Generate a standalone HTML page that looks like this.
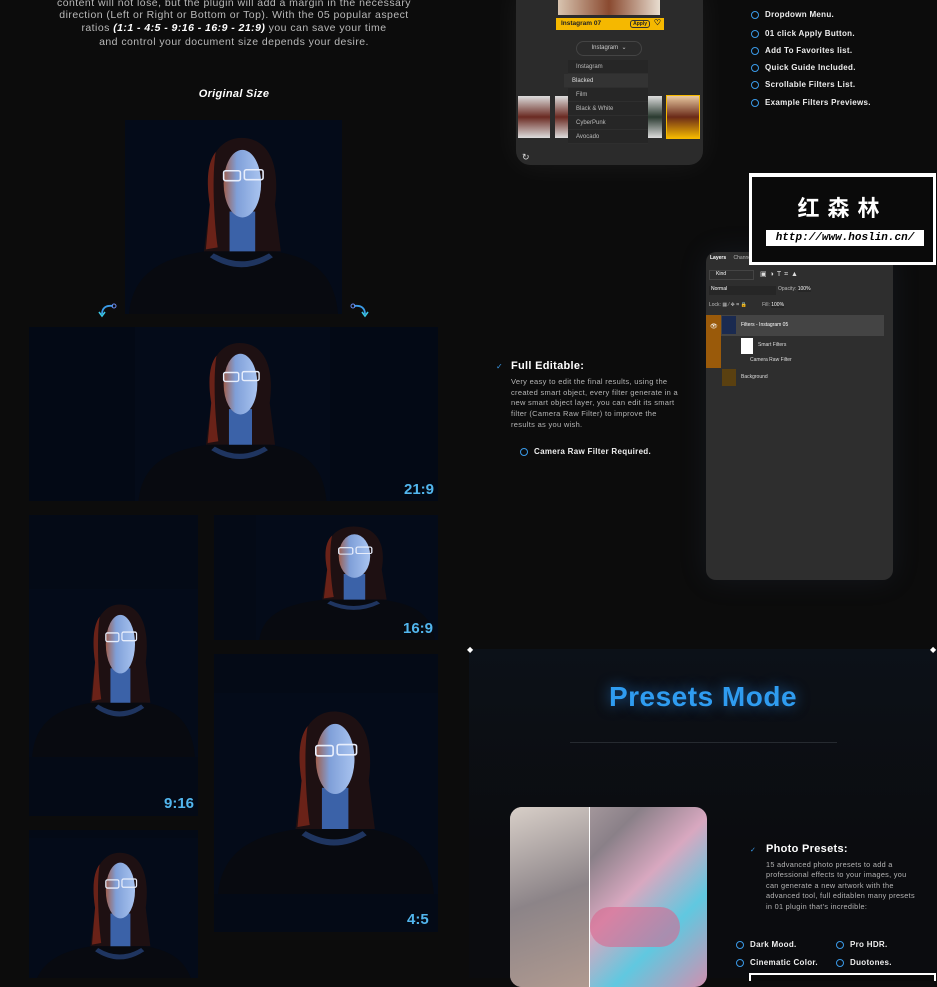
<!DOCTYPE html>
<html><head><meta charset="utf-8">
<style>
*{margin:0;padding:0;box-sizing:border-box}
body{width:937px;height:978px;background:#0c0c0c;position:relative;overflow:hidden;font-family:"Liberation Sans",sans-serif;color:#fff}
.a{position:absolute}
.ph{position:absolute;background:#040a16;overflow:hidden}
.ph svg{position:absolute}
.lab{position:absolute;font-weight:bold;font-size:15px;color:#52b6ee}
.tx{position:absolute;left:0;width:468px;text-align:center;font-size:10.5px;color:#b9b9b9;line-height:14px;letter-spacing:.45px}
.bl{position:absolute;font-size:8px;font-weight:bold;color:#eee;white-space:nowrap;letter-spacing:.3px}
.bl:before{content:"";position:absolute;left:-14px;top:1px;width:6px;height:6px;border:1.6px solid #3a9ae8;border-radius:50%}
.mi{height:14px;font-size:6px;color:#bbb;padding-left:8px;line-height:14px;border-bottom:1px solid #2e2e2e;background:#262626}
.lr{position:absolute;left:0;width:179px;font-size:5px;color:#ddd}
</style></head><body>
<svg width="0" height="0" style="position:absolute">
<defs>
<linearGradient id="fg" x1="0" x2="1"><stop offset="0" stop-color="#a0604f"/><stop offset=".35" stop-color="#7f9fd8"/><stop offset="1" stop-color="#a9c4f0"/></linearGradient>
<symbol id="p" viewBox="0 0 220 195" preserveAspectRatio="none">
<rect width="220" height="195" fill="#040b19"/>
<path d="M86,85 C78,40 96,18 118,18 C144,18 158,42 152,85 L158,132 L80,132 Z" fill="#1e1012"/>
<path d="M86,85 C82,60 84,42 92,32 C88,55 90,100 94,128 L82,130 Z" fill="#6a2218"/>
<rect x="106" y="92" width="26" height="46" fill="#3b62a8"/>
<path d="M4,195 C8,152 40,138 82,132 L152,132 C188,138 212,152 216,195 Z" fill="#080a10"/>
<path d="M90,134 Q118,150 146,134 L150,138 Q118,158 86,138 Z" fill="#1f3560"/>
<ellipse cx="119" cy="64" rx="19" ry="34" fill="url(#fg)"/>
<rect x="100" y="51" width="17" height="10" rx="2" fill="none" stroke="#e8eefc" stroke-width="1.6"/>
<rect x="121" y="50" width="19" height="10" rx="2" fill="none" stroke="#e8eefc" stroke-width="1.6"/>
</symbol>
</defs></svg>

<div class="tx" style="top:-4px">content will not lose, but the plugin will add a margin in the necessary</div>
<div class="tx" style="top:8px">direction (Left or Right or Bottom or Top). With the 05 popular aspect</div>
<div class="tx" style="top:21px">ratios <b style="color:#fff"><i>(1:1 - 4:5 - 9:16 - 16:9 - 21:9)</i></b> you can save your time</div>
<div class="tx" style="top:35px">and control your document size depends your desire.</div>
<div class="a" style="left:0;width:468px;top:88px;text-align:center;font-size:11px;font-weight:bold;font-style:italic;letter-spacing:.3px">Original Size</div>

<div class="ph" style="left:125px;top:120px;width:217px;height:194px"><svg width="217" height="194"><use href="#p"/></svg></div>
<svg class="a" style="left:98px;top:302px" width="20" height="16"><path d="M15,4 C8,3 4,6 4,12" fill="none" stroke="#3b9be6" stroke-width="1.8"/><path d="M1,10 L4,14 L7,10" fill="none" stroke="#3bc8e6" stroke-width="1.6"/><circle cx="16" cy="4" r="2" fill="none" stroke="#6a8cf0"/></svg>
<svg class="a" style="left:349px;top:302px" width="20" height="16"><path d="M5,4 C12,3 16,6 16,12" fill="none" stroke="#3b9be6" stroke-width="1.8"/><path d="M13,10 L16,14 L19,10" fill="none" stroke="#3bc8e6" stroke-width="1.6"/><circle cx="4" cy="4" r="2" fill="none" stroke="#6a8cf0"/></svg>

<div class="ph" style="left:29px;top:327px;width:409px;height:174px;background:#030915"><svg style="left:106px;top:0" width="195" height="174"><use href="#p"/></svg></div>
<div class="lab" style="left:404px;top:481px">21:9</div>

<div class="ph" style="left:29px;top:515px;width:169px;height:301px"><svg style="left:0;top:74px" width="169" height="168"><use href="#p"/></svg></div>
<div class="lab" style="left:164px;top:795px">9:16</div>

<div class="ph" style="left:214px;top:515px;width:224px;height:125px"><svg style="left:42px;top:0" width="182" height="125"><use href="#p"/></svg></div>
<div class="lab" style="left:403px;top:620px">16:9</div>

<div class="ph" style="left:214px;top:654px;width:224px;height:278px"><svg style="left:0;top:39px" width="224" height="201"><use href="#p"/></svg></div>
<div class="lab" style="left:407px;top:911px">4:5</div>

<div class="ph" style="left:29px;top:830px;width:169px;height:148px"><svg style="left:0;top:8px" width="169" height="160"><use href="#p"/></svg></div>

<div class="a" style="left:516px;top:-10px;width:187px;height:175px;background:#2b2b2b;border-radius:0 0 14px 14px;box-shadow:0 0 30px rgba(255,255,255,0.06)">
  <div class="a" style="left:42px;top:10px;width:102px;height:15px;background:linear-gradient(90deg,#d8c4b0,#8a4a30,#e8ddd0)"></div>
  <div class="a" style="left:40px;top:28px;width:108px;height:12px;background:#f5b800;font-size:6.5px;font-weight:bold;color:#222;padding:2px 5px">Instagram 07<span style="position:absolute;right:14px;top:2px;border:1px solid #333;border-radius:3px;font-size:5px;padding:0 2px">Apply</span><span style="position:absolute;right:3px;top:0;font-size:8px">♡</span></div>
  <div class="a" style="left:60px;top:51px;width:66px;height:15px;border:1px solid #444;border-radius:8px;font-size:6px;color:#ccc;text-align:center;line-height:13px">Instagram &nbsp;⌄</div>
  <div class="a" style="left:2px;top:106px;width:32px;height:42px;background:linear-gradient(#ddd,#6a2a22,#ddd)"></div>
  <div class="a" style="left:39px;top:106px;width:20px;height:42px;background:linear-gradient(#ddd,#6a2a22,#ddd)"></div>
  <div class="a" style="left:130px;top:106px;width:16px;height:42px;background:linear-gradient(#ddd,#2a3a30,#ddd)"></div>
  <div class="a" style="left:150px;top:105px;width:34px;height:44px;border:1.5px solid #f5b800;background:linear-gradient(#e8c8a0,#6a2a18,#f5b800)"></div>
  <div class="a" style="left:52px;top:70px;width:80px">
    <div class="mi">Instagram</div><div class="mi" style="margin-left:-4px;width:84px;background:#333;color:#ddd">Blacked</div><div class="mi">Film</div><div class="mi">Black &amp; White</div><div class="mi">CyberPunk</div><div class="mi">Avocado</div>
  </div>
  <div class="a" style="left:6px;top:162px;font-size:9px;color:#ddd">↻</div>
</div>

<div class="bl" style="left:765px;top:10px">Dropdown Menu.</div>
<div class="bl" style="left:765px;top:29px">01 click Apply Button.</div>
<div class="bl" style="left:765px;top:46px">Add To Favorites list.</div>
<div class="bl" style="left:765px;top:63px">Quick Guide Included.</div>
<div class="bl" style="left:765px;top:80px">Scrollable Filters List.</div>
<div class="bl" style="left:765px;top:98px">Example Filters Previews.</div>

<div class="a" style="left:706px;top:252px;width:187px;height:328px;background:#2e2e2e;border-radius:10px;box-shadow:0 0 30px rgba(80,110,160,0.12)">
  <div class="a" style="left:4px;top:3px;font-size:5px;font-weight:bold">Layers <span style="font-weight:normal;color:#bbb;margin-left:6px">Channels</span> <span style="color:#bbb;margin-left:4px">Paths</span></div>
  <div class="a" style="left:3px;top:18px;width:45px;height:10px;border:1px solid #444;font-size:5px;padding-left:6px">Kind</div>
  <div class="a" style="left:54px;top:18px;font-size:7px;color:#ddd;letter-spacing:3px">▣◑T⌗▲</div>
  <div class="a" style="left:3px;top:34px;width:67px;height:9px;background:#262626;font-size:5px;padding-left:2px">Normal</div>
  <div class="a" style="left:72px;top:34px;font-size:5px;color:#bbb">Opacity: <span style="color:#fff;background:#262626">100%</span></div>
  <div class="a" style="left:3px;top:50px;font-size:5px;color:#bbb">Lock: ▦ ⁄ ✥ ⌗ 🔒 <span style="margin-left:14px">Fill: </span><span style="color:#fff;background:#262626">100%</span></div>
  <div class="a" style="left:0;top:63px;width:15px;height:53px;background:#9a5a0a"></div>
  <div class="a" style="left:15px;top:63px;width:163px;height:21px;background:#444"></div>
  <div class="a" style="left:16px;top:64px;width:14px;height:18px;background:#1a2a50"></div>
  <div class="a" style="left:35px;top:70px;font-size:5px">Filters - Instagram 05</div>
  <div class="a" style="left:35px;top:86px;width:12px;height:16px;background:#fff"></div>
  <div class="a" style="left:52px;top:90px;font-size:5px;color:#ddd">Smart Filters</div>
  <div class="a" style="left:44px;top:105px;font-size:5px;color:#ddd">Camera Raw Filter</div>
  <div class="a" style="left:16px;top:117px;width:14px;height:17px;background:#5a4010"></div>
  <div class="a" style="left:35px;top:122px;font-size:5px;color:#ddd">Background</div>
  <div class="a" style="left:4px;top:71px;font-size:6px">👁</div>
</div>

<div class="a" style="left:749px;top:173px;width:187px;height:92px;background:#0a0a0a;border:3px solid #fff;border-top-width:4px">
  <div class="a" style="left:0;width:181px;top:14px;text-align:center;font-family:'Noto Sans CJK SC',sans-serif;font-size:22px;font-weight:bold;letter-spacing:8px">红森林</div>
  <div class="a" style="left:14px;top:53px;width:158px;height:16px;background:#fff;color:#000;font-family:'Liberation Mono',monospace;font-style:italic;font-weight:bold;font-size:11px;text-align:center;line-height:16px">http://www.hoslin.cn/</div>
</div>

<div class="a" style="left:496px;top:362px;font-size:8px;color:#3a9ae8">✓</div>
<div class="a" style="left:511px;top:360px;font-size:11px;font-weight:bold;letter-spacing:.3px">Full Editable:</div>
<div class="a" style="left:511px;top:377px;font-size:7.5px;color:#b5b5b5;line-height:10.7px;width:170px;letter-spacing:.3px">Very easy to edit the final results, using the created smart object, every filter generate in a new smart object layer, you can edit its smart filter (Camera Raw Filter) to improve the results as you wish.</div>
<div class="bl" style="left:534px;top:447px">Camera Raw Filter Required.</div>

<div class="a" style="left:469px;top:649px;width:468px;height:329px;background:linear-gradient(180deg,#0c1118,#0b0c0f 60%)"></div>
<div class="a" style="left:467px;top:645px;font-size:8px">◆</div>
<div class="a" style="left:930px;top:645px;font-size:8px">◆</div>
<div class="a" style="left:469px;top:681px;width:468px;text-align:center;font-size:28px;font-weight:bold;color:#2f9cf0;text-shadow:0 0 14px rgba(40,140,240,0.6);letter-spacing:.5px">Presets Mode</div>
<div class="a" style="left:570px;top:742px;width:267px;height:1px;background:#262a30"></div>
<div class="a" style="left:510px;top:807px;width:197px;height:180px;border-radius:12px;overflow:hidden;background:linear-gradient(135deg,#c9b9b8 0%,#8a8088 35%,#d8a8c0 55%,#60c8e0 75%,#d090b0 100%)">
  <div class="a" style="left:0;top:0;width:80px;height:180px;background:linear-gradient(160deg,#d8cfc8,#8c8488 50%,#b09a90)"></div>
  <div class="a" style="left:79px;top:0;width:1px;height:180px;background:#fff"></div>
  <div class="a" style="left:80px;top:100px;width:90px;height:40px;background:#d86890;opacity:.6;border-radius:20px"></div>
</div>
<div class="a" style="left:750px;top:846px;font-size:7px;color:#3a9ae8">✓</div>
<div class="a" style="left:766px;top:843px;font-size:11px;font-weight:bold;letter-spacing:.3px">Photo Presets:</div>
<div class="a" style="left:766px;top:860px;font-size:7.3px;color:#b5b5b5;line-height:10.4px;width:150px;letter-spacing:.3px">15 advanced photo presets to add a professional effects to your images, you can generate a new artwork with the advanced tool, full editablen many presets in 01 plugin that's incredible:</div>
<div class="bl" style="left:750px;top:940px">Dark Mood.</div>
<div class="bl" style="left:850px;top:940px">Pro HDR.</div>
<div class="bl" style="left:750px;top:958px">Cinematic Color.</div>
<div class="bl" style="left:850px;top:958px">Duotones.</div>
<div class="a" style="left:749px;top:973px;width:187px;height:8px;background:#0a0a0a;border:2px solid #fff;border-bottom:none"></div>
</body></html>
